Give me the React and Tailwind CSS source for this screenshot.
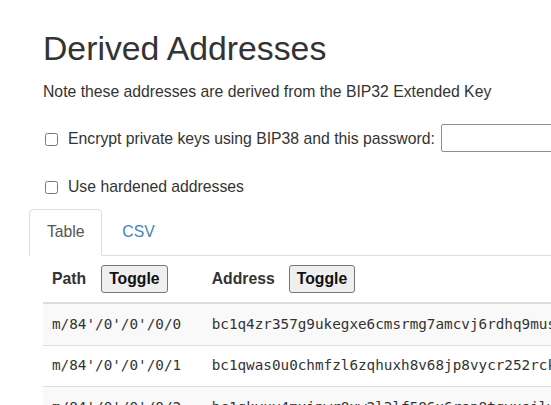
import React from 'react'

const rows = [
  { path: "m/84'/0'/0'/0/0", address: 'bc1q4zr357g9ukegxe6cmsrmg7amcvj6rdhq9mus3xk2d', striped: true },
  { path: "m/84'/0'/0'/0/1", address: 'bc1qwas0u0chmfzl6zqhuxh8v68jp8vycr252rck7ft4', striped: false },
  { path: "m/84'/0'/0'/0/2", address: 'bc1qkyuv4mxjnwr8xw2l3lf586u6rsp8tqvxsilwt9q', striped: true },
]

const ToggleButton = () => (
  <button className="h-[28px] px-[7px] bg-[#efefef] border border-[#767676] rounded-[3px] text-[15.75px] font-bold text-[#111] leading-none">
    Toggle
  </button>
)

const App = () => {
  return (
    <div className="w-[551px] h-[405px] overflow-hidden bg-white text-[#333] font-['Liberation_Sans',Arial,sans-serif]">
      <div className="pl-[43px] pt-[30px]">
        <h1 className="text-[33.75px] leading-[37px] font-normal whitespace-nowrap">Derived Addresses</h1>
        <p className="mt-[13.5px] text-[15.75px] leading-[22.5px] whitespace-nowrap">
          Note these addresses are derived from the BIP32 Extended Key
        </p>

        <div className="mt-[21px] flex items-start h-[28px] whitespace-nowrap">
          <label className="mt-[4px] h-[22.5px] flex items-center text-[15.75px] leading-[22.5px]">
            <input type="checkbox" className="ml-[2px] mr-[10px] w-[13px] h-[13px]" />
            <span>Encrypt private keys using BIP38 and this password:</span>
          </label>
          <input type="text" className="ml-[6px] h-[28px] w-[160px] shrink-0 border border-[#8f8f8f] rounded-[2px] bg-white" />
        </div>

        <label className="mt-[24px] h-[22.5px] flex items-center text-[15.75px] leading-[22.5px] whitespace-nowrap">
          <input type="checkbox" className="ml-[2px] mr-[10px] w-[13px] h-[13px]" />
          <span>Use hardened addresses</span>
        </label>
      </div>

      <div className="mt-[10.5px] ml-[29px]">
        <ul className="flex border-b border-[#ddd] text-[15.75px] leading-[22.5px]">
          <li className="-mb-px mr-[2px] border border-[#ddd] border-b-white bg-white rounded-t-[4.5px] px-[16.9px] py-[11.25px] text-[#555]">
            Table
          </li>
          <li className="-mb-px border border-transparent px-[16.9px] py-[11.25px] text-[#4b82b8]">CSV</li>
        </ul>

        <div className="ml-[14px] w-[600px]">
          <div className="flex items-center px-[9px] py-[9px] border-b-[2px] border-[#ddd] text-[15.75px] font-bold whitespace-nowrap">
            <div className="w-[159.7px] shrink-0 flex items-center gap-[15px]">
              <span>Path</span>
              <ToggleButton />
            </div>
            <div className="flex items-center gap-[14px]">
              <span>Address</span>
              <ToggleButton />
            </div>
          </div>

          {rows.map((row) => (
            <div
              key={row.path}
              className={`flex items-center h-[41.5px] px-[9px] border-b border-[#ddd] font-['DejaVu_Sans_Mono',monospace] text-[14.3px] text-[#333] whitespace-nowrap ${row.striped ? 'bg-[#f9f9f9]' : 'bg-white'}`}
            >
              <span className="w-[159.7px] shrink-0">{row.path}</span>
              <span>{row.address}</span>
            </div>
          ))}
        </div>
      </div>
    </div>
  )
}

export default App
